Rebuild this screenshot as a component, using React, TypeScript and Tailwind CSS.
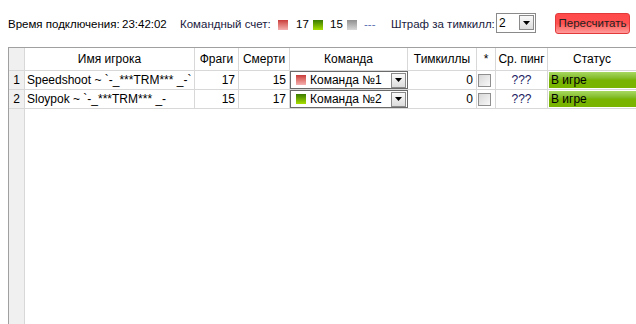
import React from 'react';

const font = { fontFamily: '"Liberation Sans", Arial, sans-serif' };

const Arrow = () => (
    <div className="w-[15px] h-[15px] border border-[#8a8a8a] bg-gradient-to-b from-[#fafafa] to-[#dcdcdc] flex items-center justify-center shrink-0">
        <svg width="7" height="4" viewBox="0 0 7 4"><path d="M0 0h7L3.5 4z" fill="#000" /></svg>
    </div>
);

const Swatch = ({ cls }: { cls: string }) => <div className={`w-[10px] h-[10px] shrink-0 ${cls}`} />;

const players = [
    { n: 1, name: 'Speedshoot ~ `-_***TRM*** _-`', frags: 17, deaths: 15, team: 'Команда №1', red: true },
    { n: 2, name: 'Sloypok ~ `-_***TRM*** _-', frags: 15, deaths: 17, team: 'Команда №2', red: false },
];

export default function App() {
    return (
        <div className="w-[636px] h-[324px] bg-white overflow-hidden text-[12px] text-black flex flex-col" style={font}>
            <div className="h-[47px] flex items-center pl-[8px] pt-[3px] shrink-0 whitespace-nowrap text-[11.5px]">
                <span className="w-[114px] shrink-0">Время подключения:</span>
                <span className="w-[58px] shrink-0">23:42:02</span>
                <span className="w-[98px] shrink-0 text-[#1a1a40]">Командный счет:</span>
                <Swatch cls="bg-gradient-to-b from-[#c83a3a] to-[#f4b0b0]" />
                <span className="ml-[8px] w-[17px] shrink-0">17</span>
                <Swatch cls="bg-gradient-to-b from-[#3a7a00] to-[#a8e000]" />
                <span className="ml-[7px] w-[17px] shrink-0">15</span>
                <Swatch cls="bg-gradient-to-b from-[#909090] to-[#d8d8d8]" />
                <span className="ml-[7px] w-[27px] shrink-0 text-[#5a70b0]">---</span>
                <span className="w-[105px] shrink-0 text-[#1a1a40]">Штраф за тимкилл:</span>
                <div className="w-[40px] h-[20px] -mt-[5px] shrink-0 border border-[#8a8a8a] flex items-center justify-between pl-[2px] pr-[1px] bg-white text-[12px]">
                    <span>2</span>
                    <Arrow />
                </div>
                <button className="ml-[19px] -mt-[3px] w-[75px] h-[21px] shrink-0 rounded-[3px] border border-[#e03a3a] bg-gradient-to-b from-[#ff4a4a] via-[#ff5050] to-[#ff9a9a] text-[#222] text-[11.5px] leading-none" style={font}>
                    Пересчитать
                </button>
            </div>

            <div className="flex-1 ml-[8px] border-l border-t border-[#a0a0a0] flex flex-col">
                <div className="h-[23px] flex border-b border-[#d8d8d8] shrink-0">
                    <div className="w-[16px] bg-[#f0f0f0] border-r border-[#d8d8d8]" />
                    <div className="w-[170px] border-r border-[#d8d8d8] flex items-center justify-center">Имя игрока</div>
                    <div className="w-[44px] border-r border-[#d8d8d8] flex items-center justify-center">Фраги</div>
                    <div className="w-[51px] border-r border-[#d8d8d8] flex items-center justify-center">Смерти</div>
                    <div className="w-[118px] border-r border-[#d8d8d8] flex items-center justify-center">Команда</div>
                    <div className="w-[69px] border-r border-[#d8d8d8] flex items-center justify-center">Тимкиллы</div>
                    <div className="w-[19px] border-r border-[#d8d8d8] flex items-center justify-center">*</div>
                    <div className="w-[52px] border-r border-[#d8d8d8] flex items-center justify-center">Ср. пинг</div>
                    <div className="flex-1 flex items-center justify-center">Статус</div>
                </div>
                {players.map(p => (
                    <div key={p.n} className="h-[19px] flex border-b border-[#d8d8d8] shrink-0">
                        <div className="w-[16px] bg-[#f0f0f0] border-r border-[#d8d8d8] flex items-center justify-center">{p.n}</div>
                        <div className="w-[170px] border-r border-[#d8d8d8] flex items-center pl-[2px] whitespace-nowrap overflow-hidden">{p.name}</div>
                        <div className="w-[44px] border-r border-[#d8d8d8] flex items-center justify-end pr-[3px]">{p.frags}</div>
                        <div className="w-[51px] border-r border-[#d8d8d8] flex items-center justify-end pr-[3px]">{p.deaths}</div>
                        <div className="w-[118px] border border-[#6a6a6a] flex items-center pl-[5px] pr-[1px]">
                            <Swatch cls={p.red ? 'bg-gradient-to-b from-[#c83a3a] to-[#f4b0b0]' : 'bg-gradient-to-b from-[#3a7a00] to-[#a8e000]'} />
                            <span className="ml-[4px] flex-1">{p.team}</span>
                            <Arrow />
                        </div>
                        <div className="w-[69px] border-r border-[#d8d8d8] flex items-center justify-end pr-[3px]">0</div>
                        <div className="w-[19px] border-r border-[#d8d8d8] flex items-center pl-[1px]">
                            <div className="w-[13px] h-[13px] border border-[#8f8f8f] bg-gradient-to-br from-[#d8d8d8] to-[#f8f8f8]" />
                        </div>
                        <div className="w-[52px] border-r border-[#d8d8d8] flex items-center justify-center text-[#202060]">???</div>
                        <div className="flex-1 flex items-center pl-[1px]">
                            <div className="flex-1 h-[16px] bg-gradient-to-b from-[#a8d860] via-[#78b400] to-[#78b400] flex items-center pl-[2px]">В игре</div>
                        </div>
                    </div>
                ))}
                <div className="flex-1 flex">
                    <div className="w-[16px] bg-[#f0f0f0] border-r border-[#d8d8d8]" />
                </div>
            </div>
        </div>
    );
}
